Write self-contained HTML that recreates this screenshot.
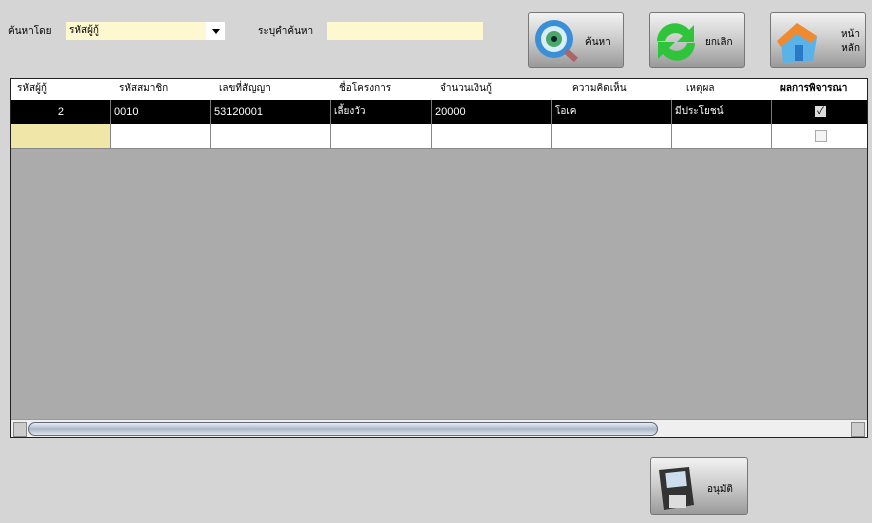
<!DOCTYPE html>
<html><head><meta charset="utf-8"><style>
body{margin:0;width:872px;height:523px;background:#d5d5d5;font-family:"Liberation Sans","Noto Sans CJK SC",sans-serif;font-size:11px;position:relative;overflow:hidden;color:#000}
.a{position:absolute}
.btn{position:absolute;width:96px;height:56px;border:1px solid #777;border-radius:3px;background:linear-gradient(#f2f2f2,#cfcfcf 45%,#9a9a9a);box-sizing:border-box}
.btn span{position:absolute;font-size:10px}
.grid{position:absolute;left:10px;top:78px;width:858px;height:360px;background:#ababab;border:1px solid #222;box-sizing:border-box;overflow:hidden}
.row{position:absolute;left:0;width:858px;height:24px}
.c{position:absolute;top:0;height:100%;box-sizing:border-box;border-right:1px solid #888;padding-left:3px;line-height:24px;white-space:nowrap}
.h .c{font-size:10px}
</style></head><body>
<div class="a" style="left:8px;top:24px;font-size:10px">ค้นหาโดย</div>
<div class="a" style="left:66px;top:22px;width:159px;height:18px;background:#fff"><div style="width:140px;height:18px;background:#fdf8d0;padding-left:3px;line-height:18px;box-sizing:border-box;font-size:10px">รหัสผู้กู้</div><div class="a" style="left:146px;top:7px;border:4px solid transparent;border-top:5px solid #000;border-bottom:0"></div></div>
<div class="a" style="left:258px;top:24px;font-size:10px">ระบุคำค้นหา</div>
<div class="a" style="left:327px;top:22px;width:156px;height:18px;background:#fdf8d0"></div>

<div class="btn" style="left:528px;top:12px"><svg class="a" style="left:4px;top:6px" width="48" height="46"><circle cx="21" cy="20" r="19" fill="#3a8fd8"/><circle cx="21" cy="20" r="13" fill="#d9eef6"/><circle cx="21" cy="20" r="8" fill="#4aa868"/><circle cx="21" cy="20" r="3" fill="#123"/><path d="M33 32l10 9" stroke="#a66" stroke-width="6"/></svg><span style="left:56px;top:22px">ค้นหา</span></div>
<div class="btn" style="left:649px;top:12px"><svg class="a" style="left:2px;top:6px" width="48" height="46"><path d="M5 22a18 18 0 0 1 32-11l5-5v17h-17l6-6a11 11 0 0 0-18 5z" fill="#2fc53a"/><path d="M43 24a18 18 0 0 1-32 11l-5 5v-17h17l-6 6a11 11 0 0 0 18-5z" fill="#2fc53a"/></svg><span style="left:55px;top:22px">ยกเลิก</span></div>
<div class="btn" style="left:770px;top:12px"><svg class="a" style="left:2px;top:6px" width="48" height="46"><path d="M8 22l18-14 18 10-4 24-30 2z" fill="#5ab3e8"/><path d="M4 22l20-18 20 13-6 7-14-9-16 13z" fill="#f08a30"/><rect x="22" y="26" width="8" height="16" fill="#2a78c8"/></svg><span style="left:55px;top:15px;text-align:right;width:34px;line-height:14px">หน้า<br>หลัก</span></div>

<div class="grid">
 <div class="row h" style="top:0;height:21px;background:#fff;border-bottom:1px solid #999">
  <div class="c" style="left:0;width:100px;border:0;line-height:20px;padding-left:6px">รหัสผู้กู้</div>
  <div class="c" style="left:100px;width:100px;border:0;line-height:20px;padding-left:8px">รหัสสมาชิก</div>
  <div class="c" style="left:200px;width:120px;border:0;line-height:20px;padding-left:8px">เลขที่สัญญา</div>
  <div class="c" style="left:320px;width:101px;border:0;line-height:20px;padding-left:8px">ชื่อโครงการ</div>
  <div class="c" style="left:421px;width:120px;border:0;line-height:20px;padding-left:8px">จำนวนเงินกู้</div>
  <div class="c" style="left:541px;width:120px;border:0;line-height:20px;padding-left:20px">ความคิดเห็น</div>
  <div class="c" style="left:661px;width:100px;border:0;line-height:20px;padding-left:14px">เหตุผล</div>
  <div class="c" style="left:761px;width:97px;border:0;line-height:20px;padding-left:8px;font-weight:bold">ผลการพิจารณา</div>
 </div>
 <div class="row" style="top:21px;background:#000;color:#fff;border-bottom:1px solid #888">
  <div class="c" style="left:0;width:100px;text-align:right;padding-right:46px;border-color:#777">2</div>
  <div class="c" style="left:100px;width:100px;border-color:#777">0010</div>
  <div class="c" style="left:200px;width:120px;border-color:#777">53120001</div>
  <div class="c" style="left:320px;width:101px;border-color:#777;font-size:10px">เลี้ยงวัว</div>
  <div class="c" style="left:421px;width:120px;border-color:#777">20000</div>
  <div class="c" style="left:541px;width:120px;border-color:#777;font-size:10px">โอเค</div>
  <div class="c" style="left:661px;width:100px;border-color:#777;font-size:10px">มีประโยชน์</div>
  <div class="c" style="left:761px;width:97px;border:0"><div class="a" style="left:43px;top:6px;width:11px;height:11px;background:#ddd;color:#000;font-size:10px;line-height:11px;text-align:center">✓</div></div>
 </div>
 <div class="row" style="top:45px;background:#fff;border-bottom:1px solid #888">
  <div class="c" style="left:0;width:100px;background:#efe6a8"></div>
  <div class="c" style="left:100px;width:100px"></div>
  <div class="c" style="left:200px;width:120px"></div>
  <div class="c" style="left:320px;width:101px"></div>
  <div class="c" style="left:421px;width:120px"></div>
  <div class="c" style="left:541px;width:120px"></div>
  <div class="c" style="left:661px;width:100px"></div>
  <div class="c" style="left:761px;width:97px;border:0"><div class="a" style="left:43px;top:6px;width:10px;height:10px;border:1px solid #aaa;background:#f4f4f4"></div></div>
 </div>
 <div class="a" style="left:0;top:340px;width:856px;height:18px;background:#efefef;border-top:1px solid #999">
  <div class="a" style="left:2px;top:2px;width:12px;height:13px;background:#ccc;border:1px solid #888"></div>
  <div class="a" style="left:17px;top:2px;width:628px;height:12px;border:1px solid #667;border-radius:7px;background:linear-gradient(#e8eef5,#a9b8c9 50%,#dfe6ef)"></div>
  <div class="a" style="right:2px;top:2px;width:12px;height:13px;background:#ccc;border:1px solid #888"></div>
 </div>
</div>

<div class="btn" style="left:650px;top:457px;width:98px;height:58px"><svg class="a" style="left:6px;top:6px" width="42" height="48"><path d="M2 6l30-3 5 38-30 5z" fill="#333"/><rect x="9" y="8" width="20" height="15" fill="#cde" transform="rotate(-6 19 15)"/><rect x="12" y="31" width="17" height="13" fill="#ddd"/></svg><span style="left:56px;top:24px">อนุมัติ</span></div>
</body></html>
